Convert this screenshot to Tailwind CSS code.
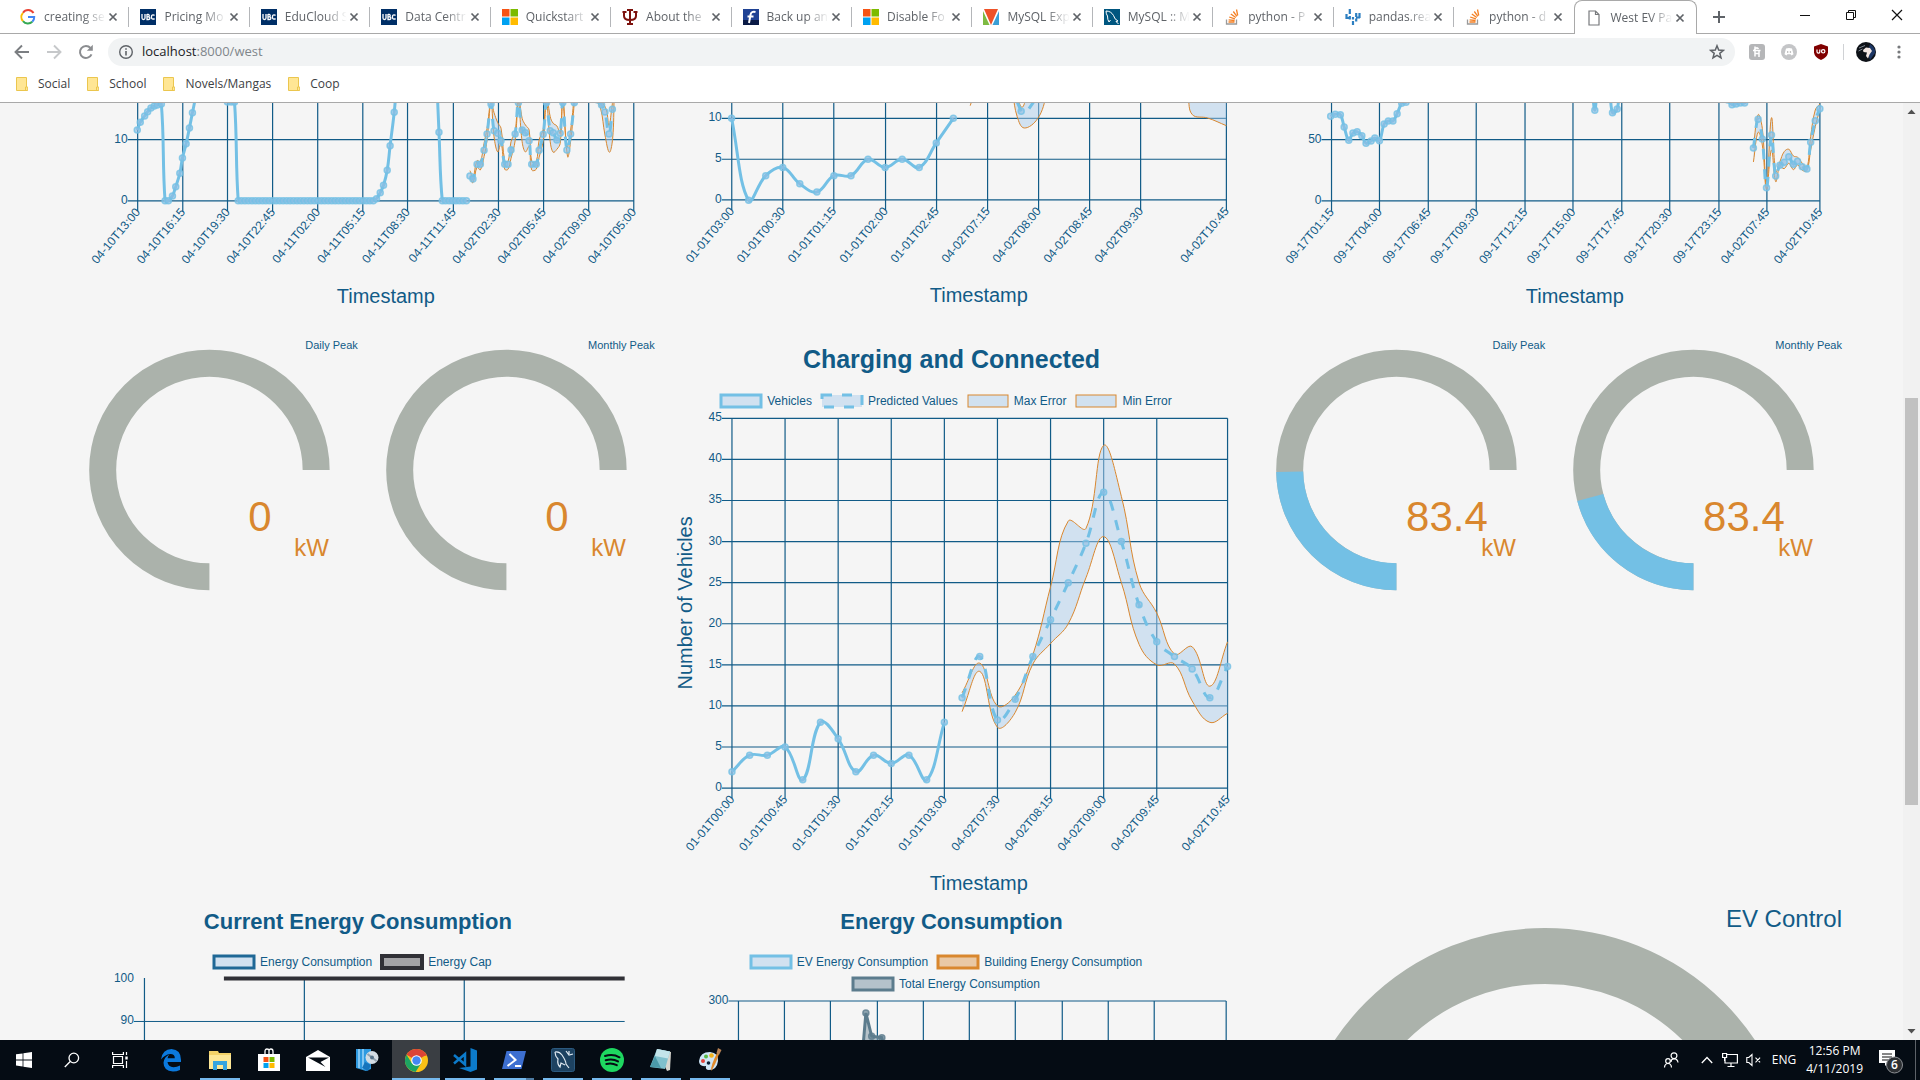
<!DOCTYPE html>
<html lang="en">
<head>
<meta charset="utf-8">
<title>West EV Parkade</title>
<script src="https://cdn.jsdelivr.net/npm/@tailwindcss/browser@4"></script>
</head>
<body class="flex h-screen flex-col overflow-hidden bg-[#f5f5f5] font-['Open_Sans',sans-serif] text-xs text-[#3c4043]">

<!-- Icons used more than once -->
<svg class="hidden">
  <symbol id="x" viewBox="0 0 16 16"><path d="M4.500 4.500l7 7m0-7l-7 7" stroke="#5f6368" stroke-width="1.700" fill="none"/></symbol>
  <symbol id="ubc" viewBox="0 0 16 16"><path d="M0 0h16v16H0z" fill="#002f67"/><path d="M2 5v4a1.500 1.500 0 003 0V5M7 5v5.500h1.500a1.300 1.300 0 000-2.700H7h1.300a1.300 1.300 0 000-2.500H7M14.500 6.500a1.700 1.700 0 00-3 .5v2a1.700 1.700 0 003 .5" stroke="#fff" stroke-width="1.300" fill="none"/></symbol>
  <symbol id="ms" viewBox="0 0 16 16"><path d="M0 0h7.500v7.500H0z" fill="#f65314"/><path d="M8.500 0H16v7.500H8.500z" fill="#7cbb00"/><path d="M0 8.500h7.500V16H0z" fill="#00a1f1"/><path d="M8.500 8.500H16V16H8.500z" fill="#ffbb00"/></symbol>
  <symbol id="so" viewBox="0 0 16 16"><path d="M2.500 10.500V15h10v-4.500" stroke="#9a9a9a" stroke-width="1.300" fill="none"/><path d="M4.500 13h6M4.600 10.800l6 .7M5.200 8l5.700 1.900M6.800 5l5 3.500M9.300 2.500l3.600 4.800M12.500.5l1.200 6" stroke="#f48024" stroke-width="1.300"/></symbol>
  <symbol id="folder" viewBox="0 0 12 14"><path d="M.5.500h10v9.500h1.200v3.500H.5z" fill="#ffe694" stroke="#ebc64e"/><path d="M9.500 13.500v-3.500h1" stroke="#ebc64e" fill="none"/></symbol>
</svg>

<header class="shrink-0 border-b border-[#a9a9a9] bg-white">
  <!-- Tab strip -->
  <div class="flex h-[34px]">
    <nav aria-label="Tabs" id="tabs" class="flex min-w-0 flex-1 border-b border-[#a9a9a9] pl-[9px]"></nav>
    <div class="flex w-[223px] shrink-0 items-center border-b border-[#a9a9a9]">
      <button aria-label="New tab" class="ml-[10px] h-6 w-6"><svg class="m-auto h-4 w-4" viewBox="0 0 16 16"><path d="M8 2v12M2 8h12" stroke="#5f6368" stroke-width="2"/></svg></button>
      <div class="ml-auto flex pb-1">
        <button aria-label="Minimize" class="h-6 w-[46px]"><svg class="m-auto h-3 w-3" viewBox="0 0 12 12"><path d="M1 6.500h10" stroke="#111"/></svg></button>
        <button aria-label="Restore" class="h-6 w-[46px]"><svg class="m-auto h-3 w-3" viewBox="0 0 12 12"><path d="M1.500 3.500h7v7h-7zM3.500 3V1.500h7v7H9" stroke="#111" fill="none"/></svg></button>
        <button aria-label="Close" class="h-6 w-[46px]"><svg class="m-auto h-3 w-3" viewBox="0 0 12 12"><path d="M1 1l10 10M11 1L1 11" stroke="#111" stroke-width="1.200"/></svg></button>
      </div>
    </div>
  </div>
  <!-- Toolbar -->
  <div class="flex items-center py-1 pr-[13px] pl-3">
    <button aria-label="Back" class="mr-3 h-5 w-5"><svg viewBox="0 0 20 20"><path d="M17 10H4m6-6.500L3.500 10l6.500 6.500" stroke="#7b7e82" stroke-width="1.900" fill="none"/></svg></button>
    <button aria-label="Forward" class="mr-3 h-5 w-5"><svg viewBox="0 0 20 20"><path d="M3 10h13m-6-6.500l6.500 6.500-6.500 6.500" stroke="#c6c8ca" stroke-width="1.900" fill="none"/></svg></button>
    <button aria-label="Reload" class="mr-3 h-5 w-5"><svg viewBox="0 0 20 20"><path d="M15.500 12.300A6 6 0 1 1 14.500 6" stroke="#8b8d90" stroke-width="2" fill="none"/><path d="M16.800 2.800v6h-6z" fill="#8b8d90"/></svg></button>
    <div class="flex h-7 flex-1 items-center rounded-full bg-[#f1f3f4] px-[10px]">
      <svg class="h-4 w-4" viewBox="0 0 16 16"><circle cx="8" cy="8" r="6.300" stroke="#5f6368" stroke-width="1.400" fill="none"/><path d="M8 7v4.500M8 4.200v1.600" stroke="#5f6368" stroke-width="1.600"/></svg>
      <a href="#" class="ml-2 flex-1 text-[13px] text-[#80868b]"><span class="text-[#202124]">localhost</span>:8000/west</a>
      <button aria-label="Bookmark this page" class="h-4 w-4"><svg viewBox="0 0 16 16"><path d="M8 1.800l1.700 4.300 4.600.3-3.500 2.900 1.200 4.500L8 11.300l-4 2.500 1.200-4.500-3.500-2.900 4.600-.3z" stroke="#5f6368" stroke-width="1.500" fill="none"/></svg></button>
    </div>
    <button aria-label="Honey" class="ml-[14px] h-4 w-4"><svg viewBox="0 0 16 16"><rect width="16" height="16" rx="3" fill="#b5b6b8"/><path d="M6 2.500v10M9.500 5a2 2 0 00-3.500 2M4 6.500h7.500M10 7v6M6 9.500h4" stroke="#fff" stroke-width="1.500" fill="none"/></svg></button>
    <button aria-label="Discord" class="ml-4 h-4 w-4"><svg viewBox="0 0 16 16"><circle cx="8" cy="8" r="8" fill="#c4c5c7"/><path d="M5 4.500q3-1 6 0l1.500 5.800-2 1.200-.9-1.200H6.400l-.9 1.200-2-1.200z" fill="#fff"/><path d="M6 7.200h1.300v1.500H6zM8.800 7.200h1.300v1.500H8.800z" fill="#b0b0b0"/></svg></button>
    <button aria-label="uBlock Origin" class="ml-4 h-4 w-4"><svg viewBox="0 0 16 16"><path d="M8 0l7 2.500v6Q14.500 13 8 16 1.500 13 1 8.500v-6z" fill="#800000"/><path d="M4 5.500v2.300a1.300 1.300 0 002.800 0V5.500" stroke="#fff" stroke-width="1.200" fill="none"/><circle cx="10.200" cy="7.300" r="1.700" stroke="#fff" stroke-width="1.200" fill="none"/></svg></button>
    <span class="ml-[14px] h-4 w-px bg-[#d0d2d5]"></span>
    <button aria-label="Profile" class="ml-3 h-5 w-5"><svg viewBox="0 0 20 20"><circle cx="10" cy="10" r="10" fill="#0d1117"/><path d="M14 2q6 4 5 9l-5 7q-3-8 0-16" fill="#1d3765"/><path d="M7 8l3-2.500 4 .5 2 3-2.500 3.500-1.500 4-2-2.500 1-3.500-3.500-.5z" fill="#f2e6e2"/><path d="M3 6l6-2.500M2.500 9l4-2" stroke="#9aa3ae" stroke-width=".8"/></svg></button>
    <button aria-label="Menu" class="ml-[15px] h-4 w-4"><svg viewBox="0 0 16 16" fill="#77797c"><circle cx="8" cy="3" r="1.600"/><circle cx="8" cy="8" r="1.600"/><circle cx="8" cy="13" r="1.600"/></svg></button>
  </div>
  <!-- Bookmarks bar -->
  <nav aria-label="Bookmarks" class="flex h-8 items-center gap-[17px] pb-1 pl-4">
    <a href="#" class="flex items-center gap-[10px]"><svg class="h-[14px] w-3"><use href="#folder"/></svg>Social</a>
    <a href="#" class="flex items-center gap-[10px]"><svg class="h-[14px] w-3"><use href="#folder"/></svg>School</a>
    <a href="#" class="flex items-center gap-[10px]"><svg class="h-[14px] w-3"><use href="#folder"/></svg>Novels/Mangas</a>
    <a href="#" class="flex items-center gap-[10px]"><svg class="h-[14px] w-3"><use href="#folder"/></svg>Coop</a>
  </nav>
</header>

<div class="flex min-h-0 flex-1">
  <main class="flex-1 overflow-hidden px-[61px] font-['Liberation_Sans',Arial,sans-serif] text-[#115b87]">
    <div class="grid grid-cols-3">
      <!-- First row: lower parts of the power and vehicle charts -->
      <section aria-label="Station power"><svg id="c1" class="w-full overflow-visible" viewBox="61 103 594 227"></svg></section>
      <section aria-label="Vehicles connected"><svg id="c2" class="w-full overflow-visible" viewBox="655 103 594 227"></svg></section>
      <section aria-label="Building power"><svg id="c3" class="w-full overflow-visible" viewBox="1248 103 594 227"></svg></section>

      <!-- Second row: peak gauges around the charging chart -->
      <section class="grid grid-cols-2 pt-[7px]">
        <div>
          <h3 class="text-right text-[11px] leading-4">Daily Peak</h3>
          <svg data-gauge="0" data-sweep="0" class="w-full overflow-visible"></svg>
        </div>
        <div>
          <h3 class="text-right text-[11px] leading-4">Monthly Peak</h3>
          <svg data-gauge="0" data-sweep="0" class="w-full overflow-visible"></svg>
        </div>
      </section>
      <section class="pt-[13px]">
        <h2 class="text-center text-[25px] leading-8 font-bold">Charging and Connected</h2>
        <ul class="mt-[15px] flex justify-center text-xs leading-[22px]">
          <li class="flex items-center gap-[6px] pr-[10px]"><svg class="h-3 w-10 overflow-visible"><rect width="40" height="12" fill="#adcdeb80" stroke="#73c0e5" stroke-width="3"/></svg>Vehicles</li>
          <li class="flex items-center gap-[6px] pr-[10px]"><svg class="h-3 w-10 overflow-visible"><rect width="40" height="12" fill="#adcdeb80" stroke="#73c0e5" stroke-width="3" stroke-dasharray="10 10"/></svg>Predicted Values</li>
          <li class="flex items-center gap-[6px] pr-[10px]"><svg class="h-3 w-10 overflow-visible"><rect width="40" height="12" fill="#adcdeb80" stroke="#d9872e"/></svg>Max Error</li>
          <li class="flex items-center gap-[6px] pr-[10px]"><svg class="h-3 w-10 overflow-visible"><rect width="40" height="12" fill="#adcdeb80" stroke="#d9872e"/></svg>Min Error</li>
        </ul>
        <svg id="c4" class="w-full overflow-visible" viewBox="655 412 594 489"></svg>
      </section>
      <section class="grid grid-cols-2 pt-[7px]">
        <div>
          <h3 class="text-right text-[11px] leading-4">Daily Peak</h3>
          <svg data-gauge="83.4" data-sweep="89" class="w-full overflow-visible"></svg>
        </div>
        <div>
          <h3 class="text-right text-[11px] leading-4">Monthly Peak</h3>
          <svg data-gauge="83.4" data-sweep="75" class="w-full overflow-visible"></svg>
        </div>
      </section>

      <!-- Third row: energy charts and EV control -->
      <section class="pt-[5px]">
        <h2 class="text-center text-[22px] leading-8 font-bold">Current Energy Consumption</h2>
        <ul class="mt-[13px] flex justify-center text-xs leading-[22px]">
          <li class="flex items-center gap-[6px] pr-[10px]"><svg class="h-3 w-10 overflow-visible"><rect width="40" height="12" fill="#adcdeb80" stroke="#1f6896" stroke-width="3"/></svg>Energy Consumption</li>
          <li class="flex items-center gap-[6px] pr-[10px]"><svg class="h-3 w-10 overflow-visible"><rect width="40" height="12" fill="#a3a3a6" stroke="#303036" stroke-width="4"/></svg>Energy Cap</li>
        </ul>
        <svg id="c5" class="w-full overflow-visible" viewBox="61 973 594 180"></svg>
      </section>
      <section class="pt-[5px]">
        <h2 class="text-center text-[22px] leading-8 font-bold">Energy Consumption</h2>
        <ul class="mx-auto mt-[13px] flex max-w-[480px] flex-wrap justify-center text-xs leading-[22px]">
          <li class="flex items-center gap-[6px] pr-[10px]"><svg class="h-3 w-10 overflow-visible"><rect width="40" height="12" fill="#adcdeb80" stroke="#73c0e5" stroke-width="3"/></svg>EV Energy Consumption</li>
          <li class="flex items-center gap-[6px] pr-[10px]"><svg class="h-3 w-10 overflow-visible"><rect width="40" height="12" fill="#e9c8a5" stroke="#d9872e" stroke-width="3"/></svg>Building Energy Consumption</li>
          <li class="flex items-center gap-[6px] pr-[10px]"><svg class="h-3 w-10 overflow-visible"><rect width="40" height="12" fill="#b4c2cb" stroke="#5c7c8d" stroke-width="3"/></svg>Total Energy Consumption</li>
        </ul>
        <svg id="c6" class="w-full overflow-visible" viewBox="655 995 594 160"></svg>
      </section>
      <section>
        <h2 class="pt-1 text-right text-2xl leading-7">EV Control</h2>
        <svg class="w-full overflow-visible" viewBox="0 33 594 220"><circle cx="297" cy="281" r="225" fill="none" stroke="#abb2ab" stroke-width="56"/></svg>
      </section>
    </div>
  </main>
  <!-- Page scroll bar -->
  <div class="flex w-[17px] flex-col items-center bg-[#f1f1f1]">
    <svg class="h-[17px] w-[17px]" viewBox="0 0 17 17"><path d="M4.500 11h8L8.500 6.500z" fill="#505050"/></svg>
    <div class="flex w-[13px] flex-1 flex-col"><div class="grow-[278]"></div><div class="grow-[407] bg-[#c1c1c1]"></div><div class="grow-[218]"></div></div>
    <svg class="h-[17px] w-[17px]" viewBox="0 0 17 17"><path d="M4.500 6h8L8.500 10.500z" fill="#505050"/></svg>
  </div>
</div>

<!-- Taskbar -->
<footer class="flex h-10 shrink-0 bg-[#050c14] text-white">
  <button aria-label="Start" class="w-12"><svg class="m-auto h-4 w-4" viewBox="0 0 16 16" fill="#fff"><path d="M0 2.300l6.600-.9v6.100H0zM7.400 1.300L16 0v7.500H7.400zM0 8.400h6.600v6.100L0 13.600zM7.400 8.400H16V16l-8.600-1.300z"/></svg></button>
  <button aria-label="Search" class="w-12"><svg class="m-auto h-4 w-4" viewBox="0 0 16 16" fill="none" stroke="#fff" stroke-width="1.300"><circle cx="9.800" cy="6" r="4.800"/><path d="M6.200 9.500L.8 15"/></svg></button>
  <button aria-label="Task view" class="mr-[3px] w-12"><svg class="m-auto h-4 w-4" viewBox="0 0 16 16" fill="none" stroke="#fff" stroke-width="1.200"><path d="M1.500 4.500h9v7h-9zM.6 0v2.500h10.800V0M.6 16v-2.500h10.800V16M14.500 0v3M14.500 9v7"/><path d="M13.300 4.500h2.400v3h-2.400z" fill="#fff" stroke="none"/></svg></button>
  <nav aria-label="Applications" class="flex gap-px">
    <button aria-label="Edge" class="flex w-12 items-center justify-center"><svg class="h-6 w-6" viewBox="0 0 24 24"><path d="M2 11.500Q3.500 1 12.500 1 22 1.500 22 12v2H8.500q.5 5 6 5.200 3.500 0 6.500-1.800V22q-3.500 1.500-7 1.500Q4.500 23 4.500 14.800 5 9 10.500 6.500 8.700 8.200 8.600 10.200h7.200Q15.800 5.800 11 6q-5 .5-9 5.500" fill="#0b79dd"/></svg></button>
    <button aria-label="File Explorer" class="relative flex w-12 items-center justify-center"><svg class="h-6 w-6" viewBox="0 0 24 24"><path d="M1 3h9l1 2h12v16H1z" fill="#f3d268"/><path d="M1 7h22v14H1z" fill="#fde796"/><path d="M5 13h14v9h-4v-5H9v5H5z" fill="#35a4e0"/></svg><span class="absolute inset-x-1 bottom-0 h-[2px] bg-[#76b9ed]"></span></button>
    <button aria-label="Store" class="flex w-12 items-center justify-center"><svg class="h-6 w-6" viewBox="0 0 24 24"><path d="M8 8V3.500Q8 1 10 1t2 1.500V7M12 8V3.500Q12 1 14 1t2 2.500V7" stroke="#fff" fill="none" stroke-width="1.300"/><path d="M1 6h22v17H1z" fill="#fff"/><path d="M6.500 9h5v5h-5z" fill="#f65314"/><path d="M12.500 9h5v5h-5z" fill="#7cbb00"/><path d="M6.500 15h5v5h-5z" fill="#00a1f1"/><path d="M12.500 15h5v5h-5z" fill="#ffbb00"/></svg></button>
    <button aria-label="Mail" class="flex w-12 items-center justify-center"><svg class="h-6 w-6" viewBox="0 0 24 24"><path d="M0 9l12-7 12 7v14H0z" fill="#fff"/><path d="M2 9.500h21L14.500 14l5 5z" fill="#050c14"/></svg></button>
    <button aria-label="Software" class="flex w-12 items-center justify-center"><svg class="h-6 w-6" viewBox="0 0 24 24"><path d="M1 1h15v20l-5 2-10-3z" fill="#2f9ae0"/><path d="M4 1v19M8 1v20" stroke="#9fd5f7" stroke-width="1.500"/><circle cx="17" cy="9.500" r="6.500" fill="#d4dde4"/><path d="M12.500 6l9 7" stroke="#93a3b0" stroke-width="2"/><circle cx="17" cy="9.500" r="2" fill="#58748a"/><path d="M10 14l6 3-3 6-6-3z" fill="#1774bb"/></svg></button>
    <button aria-label="Chrome" class="relative flex w-12 items-center justify-center bg-[#3a3e43]"><svg class="h-[23px] w-[23px]" viewBox="0 0 24 24"><circle cx="12" cy="12" r="12" fill="#fbc116"/><path d="M12 12L1.600 6A12 12 0 0122.400 6z" fill="#dc4437"/><path d="M1.600 6A12 12 0 0011 24l6-9.500H7z" fill="#1da462"/><path d="M12 6.500h10.600" stroke="#dc4437" stroke-width="1"/><circle cx="12" cy="12" r="5.500" fill="#fff"/><circle cx="12" cy="12" r="4.400" fill="#4587f3"/></svg><span class="absolute inset-x-0 bottom-0 h-[2px] bg-[#76b9ed]"></span></button>
    <button aria-label="Visual Studio Code" class="relative flex w-12 items-center justify-center"><svg class="h-6 w-6" viewBox="0 0 24 24"><path d="M17.500 0L24 2.500v19L17.500 24 6 20l11.500-1.500z" fill="#0c7bcb"/><path d="M1 7l11 9.500V6L1 15.500" stroke="#0c7bcb" stroke-width="2.500" fill="none"/></svg><span class="absolute inset-x-1 bottom-0 h-[2px] bg-[#76b9ed]"></span></button>
    <button aria-label="PowerShell" class="relative flex w-12 items-center justify-center"><svg class="h-6 w-6" viewBox="0 0 24 24"><path d="M4.500 3H24l-4.500 18H0z" fill="#3d6fd0"/><path d="M7.500 6l6 6-8 6M13 18h6" stroke="#fff" stroke-width="2" fill="none"/></svg><span class="absolute inset-x-1 bottom-0 h-[2px] bg-[#76b9ed]"></span><span class="absolute right-1 bottom-0 h-[2px] w-2 bg-[#4e7ca4]"></span></button>
    <button aria-label="MySQL Workbench" class="relative flex w-12 items-center justify-center"><svg class="h-6 w-6" viewBox="0 0 24 24"><rect x=".5" y=".5" width="23" height="23" rx="2" fill="#1d4261" stroke="#2c5a80"/><path d="M4 4q4-1 7 3 4 6 4 9l3 4M4 4q0 4 3 7-1 5 2 8l1-4 4 2M15 3l3 4 4-1M18 3v3" stroke="#dfe9f1" fill="none" stroke-width="1.200"/></svg><span class="absolute inset-x-1 bottom-0 h-[2px] bg-[#76b9ed]"></span></button>
    <button aria-label="Spotify" class="relative flex w-12 items-center justify-center"><svg class="h-6 w-6" viewBox="0 0 24 24"><circle cx="12" cy="12" r="12" fill="#1ed760"/><path d="M5 8q8-2.500 14.500 1.300M5.700 12.200q7-2 12.300 1.200M6.300 16q5.500-1.500 10.500 1.200" stroke="#050c14" stroke-width="2" stroke-linecap="round" fill="none"/></svg><span class="absolute inset-x-1 bottom-0 h-[2px] bg-[#76b9ed]"></span></button>
    <button aria-label="Notepad" class="relative flex w-12 items-center justify-center"><svg class="h-6 w-6" viewBox="0 0 24 24"><path d="M8 1l14 3-1 18-3 1z" fill="#d7d6cf"/><path d="M8 1l13 2.500L16 21 1 19z" fill="#7fc0cd"/><path d="M8 1l13 2.500-2 7L6 8z" fill="#c3e4ea"/><path d="M1 19l5-11 6 12z" fill="#4b9aaa"/></svg><span class="absolute inset-x-1 bottom-0 h-[2px] bg-[#76b9ed]"></span></button>
    <button aria-label="Paint" class="relative flex w-12 items-center justify-center"><svg class="h-6 w-6" viewBox="0 0 24 24"><path d="M1 13Q2 4 12 4q9 1 8 9-1 9-9 9-4 0-3-4-7 1-7-5" fill="#cfe6f6"/><circle cx="5" cy="13" r="2" fill="#e2453c"/><circle cx="8" cy="8.500" r="2" fill="#58b947"/><circle cx="13.500" cy="7.500" r="2.300" fill="#f2b21d"/><circle cx="10.500" cy="15" r="1.800" fill="#0b2034"/><path d="M13 23Q12.500 18 19 5l2 1Q17 18 13 23" fill="#e08a2c"/><path d="M18.500 5L20 0l3.500 2L21 7z" fill="#b98254"/></svg><span class="absolute inset-x-1 bottom-0 h-[2px] bg-[#76b9ed]"></span></button>
  </nav>
  <div class="ml-auto flex items-center">
    <button aria-label="People" class="mr-[22px]"><svg class="h-4 w-4" viewBox="0 0 16 16" fill="none" stroke="#fff" stroke-width="1.200"><circle cx="11" cy="3.700" r="2.900"/><circle cx="5" cy="9" r="2.300"/><path d="M8 10q0-3 3-3.300 3.500.3 4 3.800M1.500 15.500q.3-4 3.500-4t3.500 4"/></svg></button>
    <button aria-label="Hidden icons" class="mr-[9px]"><svg class="h-3 w-3" viewBox="0 0 12 12"><path d="M.8 9L6 3.500 11.200 9" stroke="#fff" stroke-width="1.300" fill="none"/></svg></button>
    <button aria-label="Network" class="mr-2"><svg class="h-4 w-4" viewBox="0 0 16 16" fill="none" stroke="#fff" stroke-width="1.200"><path d="M5 2.500h10.400v8.500H3V6M9 11v3M5.500 14.500h7M.6 1.500h4v4h-4zM2.600 5.500V9"/></svg></button>
    <button aria-label="Volume muted" class="mr-[10px]"><svg class="h-4 w-4" viewBox="0 0 16 16" fill="none" stroke="#fff" stroke-width="1.100"><path d="M.8 5.500h2L6 2.500v11l-3.200-3h-2zM9.500 5.700l4.600 4.600m0-4.600l-4.600 4.600"/></svg></button>
    <button class="mr-[10px] text-xs">ENG</button>
    <button class="mr-4 text-center text-xs leading-[18px]"><time class="block">12:56 PM</time><time class="block">4/11/2019</time></button>
    <button aria-label="Notifications, 6 new" class="mr-3"><svg class="h-6 w-6 overflow-visible" viewBox="0 0 24 24"><path d="M0 2h16v13H9l-3 3v-3H0z" fill="#fff"/><path d="M3 6h10M3 9h10M3 12h6" stroke="#111" stroke-width="1.200"/><circle cx="15.500" cy="17" r="8" fill="#2c2f33" stroke="#8d9094"/><text x="15.500" y="21" text-anchor="middle" font-size="12" font-weight="600" fill="#fff">6</text></svg></button>
    <span class="mr-1 h-10 w-px bg-[#5d6268]"></span>
  </div>
</footer>

<script>
// ---- Browser tabs
const icons = {
  google: '<path d="M13.500 4A6.300 6.300 0 003 3.800" stroke="#ea4335"/><path d="M3 3.800a6.300 6.300 0 000 8.400" stroke="#fbbc05"/><path d="M3 12.200a6.300 6.300 0 009.300.6" stroke="#34a853"/><path d="M12.300 12.800Q14.300 11 14.200 8H8" stroke="#4285f4"/>',
  iu: '<path d="M8 0v16M5 1h6M5 15h6M2 3v4q0 4 6 4t6-4V3M.5 3h4M11.500 3h4" stroke="#7d110c"/>',
  f: '<path d="M0 0h16v16H0z" fill="#1f4294" stroke="none"/><path d="M0 11h16v5H0z" fill="#0a1a45" stroke="none"/><path d="M12.500 3Q8 2 7.500 6L6 14M4.500 7.500h6" stroke="#fff"/>',
  v: '<path d="M1 0h14L8 16z" fill="#ee5228" stroke="none"/><path d="M0 2l6.500 14H0z" fill="#7dba42" stroke="none"/><path d="M16 2L9.500 16H16z" fill="#3a9fd6" stroke="none"/>',
  dolphin: '<path d="M0 0h16v16H0z" fill="#00567f" stroke="none"/><path d="M2 2q5 0 7.500 4.500 1 4 4.500 5.500l-2 .5 2.500 2.500M2 2q0 3 1.500 5 0 4 1.500 6l1.500-2" stroke="#fff" stroke-width="1"/>',
  plot: '<path d="M1.500 5v5M4.800 0v5M4.800 7v3.500M8 12v4M8 8v2.500M11.200 4v4M11.200 9.500v3M14.500 4v5M1 9h4M11 8.500h4" stroke="#2d7fc1" stroke-width="2.200"/>',
  page: '<path d="M3 1h6.500L13 4.500V15H3zM9.500 1v3.500H13" stroke="#77797c" stroke-width="1.200"/>'
};
const tabs = [['google','creating se'],['ubc','Pricing Mo'],['ubc','EduCloud S'],['ubc','Data Centr'],['ms','Quickstart'],['iu','About the'],['f','Back up an'],['ms','Disable Fo'],['v','MySQL Exp'],['dolphin','MySQL :: M'],['so','python - P'],['plot','pandas.rea'],['so','python - d'],['page','West EV Pa']];
document.getElementById('tabs').innerHTML = tabs.map(([icon, title], i) => {
  const body = icons[icon] || `<use href="#${icon}"/>`;
  const active = i === tabs.length - 1;
  return `<div class="${active ? 'flex h-[34px] min-w-0 flex-1 items-center rounded-t-lg border-x border-t border-[#a9a9a9] bg-white pl-[11px] pr-2' : 'flex min-w-0 flex-1 items-center pl-[11px] pr-2'}">
    <svg class="h-4 w-4 shrink-0" viewBox="0 0 16 16" fill="none" stroke-width="2">${body}</svg>
    <a href="#" class="-mr-2 ml-2 min-w-0 flex-1 whitespace-nowrap text-[#5f6368] [mask-image:linear-gradient(to_right,black_60%,transparent_95%)]">${title}</a>
    <button aria-label="Close tab" class="ml-1 h-4 w-4 shrink-0"><svg class="h-4 w-4"><use href="#x"/></svg></button>
    ${i < tabs.length - 2 ? '<span class="-mr-2 ml-[7px] h-5 w-px shrink-0 bg-[#b4b6b9]"></span>' : '<span class="-mr-2 ml-[7px] w-px shrink-0"></span>'}
  </div>`;
}).join('');

// ---- Charts
const INK = '#115b87', BLUE = '#73c0e5', ORANGE = '#d9872e', FILL = '#adcdeb80';

// Cardinal spline with a tension of 0.4
function spline(p, join) {
  const cp = p.map((c, i) => {
    const a = p[i - 1] || c, b = p[i + 1] || c;
    const d1 = Math.hypot(c[0] - a[0], c[1] - a[1]), d2 = Math.hypot(b[0] - c[0], b[1] - c[1]);
    const s = d1 + d2 || 1, f1 = .4 * d1 / s, f2 = .4 * d2 / s;
    return [c[0] - f1 * (b[0] - a[0]), c[1] - f1 * (b[1] - a[1]), c[0] + f2 * (b[0] - a[0]), c[1] + f2 * (b[1] - a[1])];
  });
  return (join || 'M') + p[0] + p.slice(1).map((c, i) => `C${cp[i][2]},${cp[i][3]} ${cp[i + 1][0]},${cp[i + 1][1]} ${c}`).join('');
}
const line = (p, c = BLUE, w = 3, dash = '') => `<path d="${spline(p)}" fill="none" stroke="${c}" stroke-width="${w}" stroke-dasharray="${dash}"/>`;
const dots = (p, c = BLUE) => p.map(([x, y]) => `<circle cx="${x}" cy="${y}" r="3" fill="${c === BLUE ? '#8fbfe4' : c}" fill-opacity=".65" stroke="${c}" stroke-width="1.500" stroke-opacity=".8"/>`).join('');
const band = (max, min) => `<path d="${spline(max)}${spline([...min].reverse(), 'L')}Z" fill="${FILL}"/>` + line(max, ORANGE, 1) + line(min, ORANGE, 1);

function axes({ xs, labels, ys, top, base, tick = 10 }) {
  const x0 = xs[0], x1 = xs[xs.length - 1];
  let s = `<g stroke="${INK}" stroke-width="1.200">`;
  xs.forEach(x => s += `<path d="M${x} ${top}V${base + 10}"/>`);
  ys.forEach(([, y]) => s += `<path d="M${x0 - tick} ${y}H${x1}"/>`);
  s += `</g><g fill="${INK}" font-size="12" text-anchor="end">`;
  ys.forEach(([v, y]) => s += `<text x="${x0 - tick}" y="${y + 3}">${v}</text>`);
  (labels || []).forEach((t, i) => s += `<text transform="translate(${xs[i]} ${base + 9}) rotate(-50)" y="4">${t}</text>`);
  return s + '</g>';
}
const caption = (x, y, t) => `<text x="${x}" y="${y}" font-size="20" text-anchor="middle" fill="${INK}">${t}</text>`;
const scale = (x0, y0, sx) => pts => pts.map(([x, y]) => [+(x0 + x / sx).toFixed(1), +(y0 + y / 3).toFixed(1)]);
const put = (id, s) => document.getElementById(id).innerHTML = s;

// Station power
{
  const at = scale(80, 100, 2.7034);
  const zeros = (a, b) => { const r = []; for (let x = a; x <= b; x += 9.38) r.push([x, 302]); return r; };
  const runs = [
    [[155,90],[163,67],[175,48],[183,35],[192,24],[201,18],[209,15],[220,12],[230,302],[239,302],[250,288],[259,260],[270,220],[277,174],[287,131],[296,84],[304,38],[313,-10]],
    [[390,-4],[399,6],[409,6],[418,6],[428,302],...zeros(437,796),[802,296],[812,278],[821,256],[831,211],[839,137],[850,37],[856,-40]],
    [[966,-40],[971,97],[980,302],...zeros(989,1047)]
  ].map(at);
  const pred = [
    [[1055,228],[1063,237],[1074,193],[1083,193],[1093,151],[1101,102],[1112,12],[1120,92],[1130,100],[1139,122],[1149,193],[1158,193],[1166,150],[1177,102],[1186,8],[1196,90],[1205,98],[1215,122],[1222,193],[1234,193],[1242,151],[1253,103],[1262,8],[1272,92],[1280,98],[1290,120],[1299,100],[1306,8],[1317,150],[1327,102],[1337,8]],
    [[1400,0],[1411,15],[1420,36],[1431,102],[1440,28]]
  ].map(at);
  const max = [
    [[1055,212],[1063,232],[1074,182],[1083,185],[1093,130],[1101,85],[1112,5],[1120,38],[1130,68],[1139,85],[1149,182],[1158,185],[1166,125],[1177,95],[1186,-15],[1196,55],[1205,75],[1215,90],[1222,185],[1234,185],[1242,120],[1253,88],[1262,-15],[1272,50],[1280,70],[1290,78],[1299,100],[1306,-15],[1317,140],[1327,90],[1337,-15]],
    [[1395,-10],[1411,5],[1424,30],[1431,77],[1438,30],[1442,-10]]
  ].map(at);
  const min = [
    [[1055,234],[1063,248],[1074,202],[1083,210],[1093,170],[1101,120],[1112,8],[1120,110],[1130,156],[1139,130],[1149,208],[1158,208],[1166,175],[1177,122],[1186,8],[1196,125],[1205,156],[1215,140],[1222,210],[1234,208],[1242,172],[1253,122],[1262,8],[1272,125],[1280,157],[1290,148],[1299,130],[1306,10],[1319,170],[1327,125],[1337,10]],
    [[1395,0],[1408,24],[1420,105],[1432,157],[1441,115],[1445,-10]]
  ].map(at);
  put('c1', axes({ xs: [156,278,399,521,643,765,886,1010,1132,1254,1376,1498].map(x => 80 + x / 2.7034), top: 90, base: 201, ys: [[0,201],[10,139.700]],
    labels: ['04-10T13:00','04-10T16:15','04-10T19:30','04-10T22:45','04-11T02:00','04-11T05:15','04-11T08:30','04-11T11:45','04-02T02:30','04-02T05:45','04-02T09:00','04-10T05:00'] })
    + max.map((m, i) => band(m, min[i])).join('') + runs.map(r => line(r) + dots(r)).join('') + pred.map(r => line(r, BLUE, 3, '10 10') + dots(r)).join('') + caption(386, 303, 'Timestamp'));
}

// Vehicles connected
{
  const at = scale(680, 100, 2.7034);
  const seen = [10,0,3,4,2,1,3,3,5,4,5,4,7,10].map((v, i) => [731.600 + i * 17.070, 200.300 - v * 8.200]);
  put('c2', axes({ xs: [140,278,416,556,694,832,970,1108,1246,1478].map(x => 680 + x / 2.7034), top: 90, base: 200, ys: [[0,200],[5,159.300],[10,118.300]],
    labels: ['01-01T03:00','01-01T00:30','01-01T01:15','01-01T02:00','01-01T02:45','04-02T07:15','04-02T08:00','04-02T08:45','04-02T09:30','04-02T10:45'] })
    + band(at([[912,-10],[925,22],[938,-10]]), at([[900,-20],[912,50],[931,84],[968,55],[994,-20]]))
    + band(at([[1374,-10],[1478,-10]]), at([[1374,-10],[1386,44],[1427,54],[1478,77]]))
    + line(at([[785,17],[790,0]]), ORANGE, 1) + line(at([[910,0],[923,34]])) + line(at([[944,26],[960,0]])) + dots(at([[923,34]]))
    + line(seen) + dots(seen) + caption(979, 302, 'Timestamp'));
}

// Building power
{
  const at = scale(1260, 100, 2.3758);
  const runs = [
    [[168,49],[179,43],[191,44],[200,81],[211,121],[221,99],[231,95],[242,107],[252,130],[264,123],[273,114],[284,122],[295,72],[305,63],[316,63],[326,41],[337,10],[347,7],[355,-20]],
    [[790,-30],[796,31],[801,-30]], [[832,-30],[838,38],[849,27],[853,-20]], [[1112,0],[1122,14],[1132,12],[1142,9],[1152,9],[1160,-5]]
  ].map(at);
  const pred = at([[1173,144],[1184,58],[1194,117],[1204,263],[1216,105],[1226,228],[1236,196],[1246,187],[1257,170],[1268,193],[1278,184],[1289,200],[1300,207],[1309,127],[1320,62],[1331,26]]);
  const max = at([[1173,140],[1184,44],[1194,85],[1204,258],[1216,53],[1226,215],[1236,185],[1246,155],[1257,148],[1268,168],[1278,172],[1289,190],[1300,205],[1309,110],[1320,30],[1331,12]]);
  const min = at([[1173,186],[1184,97],[1194,135],[1204,268],[1216,150],[1226,245],[1236,200],[1246,206],[1257,190],[1268,209],[1278,195],[1289,211],[1300,212],[1309,150],[1320,80],[1331,28]]);
  put('c3', axes({ xs: [170,284,400,514,630,744,860,974,1091,1205,1331].map(x => 1260 + x / 2.3758), top: 90, base: 201, ys: [[0,201],[50,139.700]],
    labels: ['09-17T01:15','09-17T04:00','09-17T06:45','09-17T09:30','09-17T12:15','09-17T15:00','09-17T17:45','09-17T20:30','09-17T23:15','04-02T07:45','04-02T10:45'] })
    + band(max, min) + runs.map(r => line(r) + dots(r)).join('') + line(pred, BLUE, 3, '10 10') + dots(pred) + caption(1575, 303, 'Timestamp'));
}

// Charging and connected
{
  const x = i => 732 + i * 17.710, y = v => 788.300 - v * 8.222;
  const seen = [2,4,4,5,1,8,6,2,4,3,4,1,8].map((v, i) => [x(i), y(v)]);
  const late = a => a.map((v, i) => [x(i + 13), y(v)]);
  const pred = late([11,16,8.300,10.800,16,20.500,25,29.800,36,30,22.300,17.800,16,14.500,11,14.800]);
  const max = late([11.600,15.200,10,11.300,16.200,24.500,32.500,31.600,41.700,35.500,25,21.300,16.300,17.200,12.400,17.800]);
  const min = late([9.300,14.200,7.400,9.200,15.100,17.600,20,25.600,30.600,25,17.500,15,15.100,10.600,8,9.100]);
  put('c4', axes({ xs: [0,3,6,9,12,15,18,21,24,28].map(x), top: y(45), base: 788.300, ys: [0,5,10,15,20,25,30,35,40,45].map(v => [v, y(v)]),
    labels: ['01-01T00:00','01-01T00:45','01-01T01:30','01-01T02:15','01-01T03:00','04-02T07:30','04-02T08:15','04-02T09:00','04-02T09:45','04-02T10:45'] })
    + band(max, min) + line(seen) + dots(seen) + line(pred, BLUE, 3, '10 10') + dots(pred)
    + `<text transform="translate(692 603) rotate(-90)" font-size="20" text-anchor="middle" fill="${INK}">Number of Vehicles</text>` + caption(979, 890, 'Timestamp'));
}

// Current energy consumption
put('c5', axes({ xs: [144.500, 304.500, 464.500], top: 978, base: 1150, ys: [] })
  + `<path d="M134 1021.500H625" stroke="${INK}"/><path d="M224 978.500H625" stroke="#303036" stroke-width="4"/>
     <g font-size="12" text-anchor="end" fill="${INK}"><text x="134" y="982">100</text><text x="134" y="1024">90</text></g>`);

// Energy consumption
{
  const total = [[862,1060],[866,1013],[871.800,1036.300],[882,1037.700],[886,1060]];
  put('c6', axes({ xs: [738.500,784.500,830.500,877.500,923.500,969.500,1015.500,1062.500,1108.500,1154.500,1226.500], top: 1001, base: 1150, ys: [[300,1001]] })
    + `<path d="M862 1060L866 1013L871.800 1036.300L882 1037.700L886 1060" fill="#8ba0ac99" stroke="#5c7c8d" stroke-width="3"/>` + dots(total, '#5c7c8d'));
}

// ---- Gauges: a 270 degree ring that starts at the bottom
document.querySelectorAll('[data-gauge]').forEach(el => {
  const sweep = +el.dataset.sweep, a = (90 + sweep) * Math.PI / 180, R = 106.800;
  const end = [148.500 + R * Math.cos(a), 121 + R * Math.sin(a)];
  el.setAttribute('viewBox', '0 4 297 260');
  el.innerHTML = `<path d="M148.500 ${121 + R}A${R} ${R} 0 1 1 ${148.500 + R} 121" fill="none" stroke="#abb2ab" stroke-width="27"/>`
    + (sweep ? `<path d="M148.500 ${121 + R}A${R} ${R} 0 0 1 ${end}" fill="none" stroke="${BLUE}" stroke-width="27"/>` : '')
    + `<g fill="${ORANGE}"><text x="199" y="182" font-size="42" text-anchor="middle">${el.dataset.gauge}</text><text x="268" y="207" font-size="24" text-anchor="end">kW</text></g>`;
});
</script>
</body>
</html>
